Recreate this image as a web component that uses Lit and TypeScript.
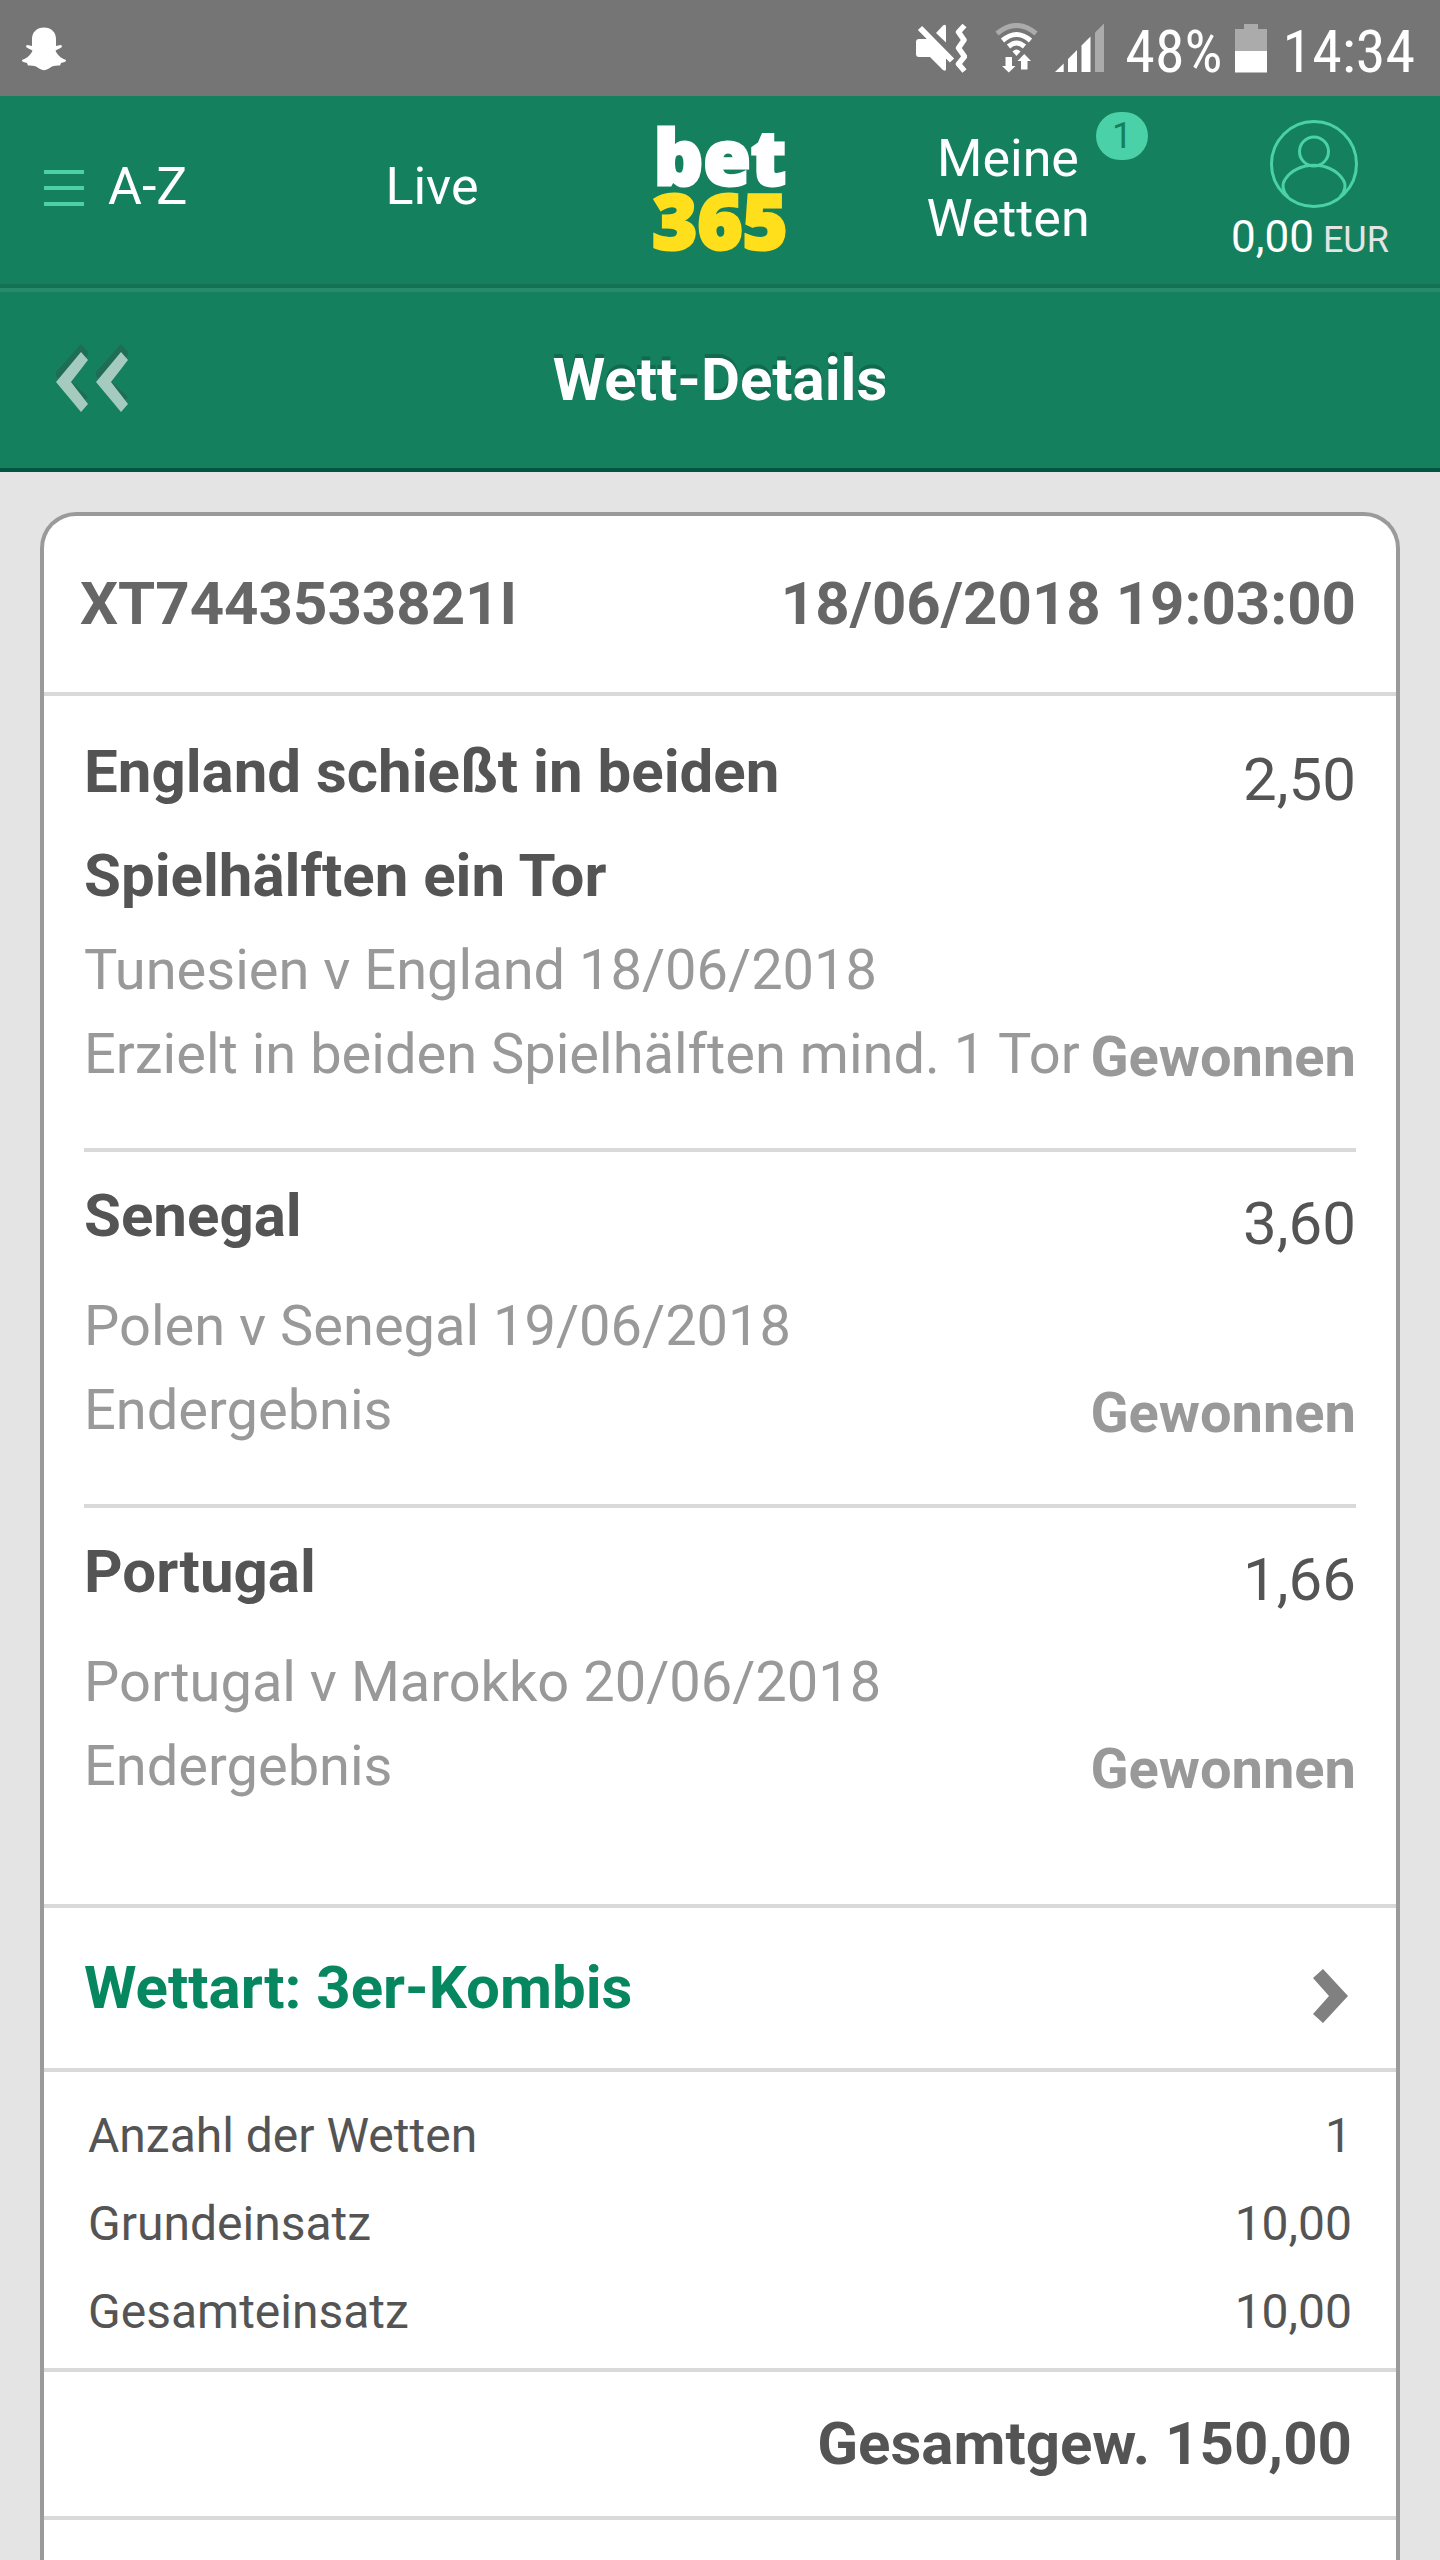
import { LitElement, html, css, svg } from "lit";
import { customElement, property } from "lit/decorators.js";

interface Selection {
  name: string;
  odds: string;
  fixture: string;
  date: string;
  market: string;
  result: string;
}

const selections: Selection[] = [
  {
    name: "England schießt in beiden Spielhälften ein Tor",
    odds: "2,50",
    fixture: "Tunesien v England",
    date: "18/06/2018",
    market: "Erzielt in beiden Spielhälften mind. 1 Tor",
    result: "Gewonnen",
  },
  {
    name: "Senegal",
    odds: "3,60",
    fixture: "Polen v Senegal",
    date: "19/06/2018",
    market: "Endergebnis",
    result: "Gewonnen",
  },
  {
    name: "Portugal",
    odds: "1,66",
    fixture: "Portugal v Marokko",
    date: "20/06/2018",
    market: "Endergebnis",
    result: "Gewonnen",
  },
];

const stakes: [string, string][] = [
  ["Anzahl der Wetten", "1"],
  ["Grundeinsatz", "10,00"],
  ["Gesamteinsatz", "10,00"],
];

const backArrow = (x: number) => svg`
  <path d="M${x + 25} 0 L${x + 32} 8 L${x + 32} 10 L${x + 16} 38 L${x + 32} 53 L${x + 25} 60 L${x} 32 L${x} 28 Z" fill="#1f6d55" />
  <path d="M${x + 25} 8 L${x + 32} 16 L${x + 15} 38 L${x + 32} 60 L${x + 25} 68 L${x} 38 Z" fill="#a5cbbf" />`;

@customElement("phone-status-bar")
export class PhoneStatusBar extends LitElement {
  static styles = css`
    :host {
      display: flex;
      align-items: center;
      justify-content: space-between;
      height: 96px;
      padding: 0 25px 0 20px;
      background: #757575;
      color: #fff;
      font-family: "Roboto Condensed", "Liberation Sans Narrow", Roboto, sans-serif;
      font-size: 60px;
      line-height: 96px;
    }
    svg {
      display: block;
      flex: none;
    }
    .tray {
      display: flex;
      align-items: center;
    }
    .wifi {
      margin-left: 28px;
    }
    .signal {
      margin: 0 20px 0 16px;
    }
    .battery {
      margin: 0 16px 0 12px;
    }
    .text {
      padding-top: 8px;
    }
  `;

  render() {
    return html`
      <svg width="48" height="48" viewBox="20 24 48 48" aria-label="Snapchat" role="img">
        <path
          fill="#fff"
          d="M44 27.5C37 27.5 32 32 32 39V46L27.500 45C26 45 25.500 47 27 47.800L32.500 50.500C31 54.500 28 57.500 22.500 59.800C21.500 60.500 22 61.700 23.500 62L27 63L28 65.500C31 65.800 34 65.300 36.500 66.800C39 68.500 41 70.200 44 70.200C47 70.200 49 68.500 51.500 66.800C54 65.300 57 65.800 60 65.500L61 63L64.500 62C66 61.700 66.500 60.500 65.500 59.800C60 57.500 57 54.500 55.500 50.500L61 47.800C62.500 47 62 45 60.500 45L56 46V39C56 32 51 27.500 44 27.500Z"
        />
      </svg>
      <div class="tray">
        <svg width="52" height="50" viewBox="915 24 52 50" aria-label="Vibration" role="img">
          <path fill="#fff" d="M919 40H931L946 55V70Q946 73 943 71L930 58H919Q916 58 916 55V43Q916 40 919 40Z" />
          <path fill="#fff" d="M936 34L943 26.500Q946 24.500 946 28V43.500Z" />
          <path stroke="#fff" stroke-width="6" d="M920 29L952 61.500" />
          <path
            fill="none"
            stroke="#fff"
            stroke-width="5.500"
            stroke-linejoin="round"
            d="M964.500 26.500L958.500 33L964 41L958.500 49L964.500 57.500L958.500 65L964.500 72"
          />
        </svg>
        <svg class="wifi" width="44" height="50" viewBox="996 24 44 50" aria-label="WLAN" role="img">
          <g fill="none" stroke-width="5">
            <path stroke="#ababab" d="M998 34.500Q1017.500 18.500 1037 34.500" />
            <path stroke="#fff" d="M1003.500 41.500Q1017.500 29.500 1031.500 41.500" />
            <path stroke="#fff" d="M1009.500 47.500Q1017.500 40.500 1025.500 47.500" />
          </g>
          <path fill="#fff" d="M1013.500 52.500Q1017.500 48.500 1021.500 52.500L1017.500 57Z" />
          <path fill="#fff" d="M1006.500 58H1013V67H1016.500L1009.800 73.500L1003 67H1006.500Z" />
          <path fill="#fff" d="M1022 70.500H1028.500V62H1032L1025.300 55L1018.500 62H1022Z" />
        </svg>
        <svg class="signal" width="50" height="50" viewBox="1055 24 50 50" aria-label="Mobilfunk" role="img">
          <path fill="#fff" d="M1055 73L1063.700 64.500V73ZM1068 73V60L1077 51V73ZM1081.500 73V46.500L1090.500 37.500V73Z" />
          <path fill="#ababab" d="M1095 73V33.500L1104 24.500V73Z" />
        </svg>
        <span class="text">48%</span>
        <svg class="battery" width="32" height="50" viewBox="1234 24 32 50" aria-label="Akku" role="img">
          <path fill="#ababab" d="M1243 25H1257V30H1266V52H1234V30H1243Z" />
          <path fill="#fff" d="M1234 52H1266V73.500H1234Z" />
        </svg>
        <span class="text">14:34</span>
      </div>
    `;
  }
}

@customElement("main-navigation")
export class MainNavigation extends LitElement {
  static styles = css`
    :host {
      display: block;
      background: #14805e;
      border-bottom: 4px solid #137253;
    }
    nav {
      display: grid;
      grid-template-columns: repeat(5, 1fr);
      height: 188px;
      font-size: 52px;
      line-height: 60px;
      text-align: center;
    }
    a {
      color: #fff;
      text-decoration: none;
    }
    svg {
      display: block;
      flex: none;
    }
    .menu,
    .live {
      line-height: 182px;
    }
    .menu {
      display: flex;
      align-items: center;
      gap: 24px;
      height: 182px;
      padding-left: 44px;
    }
    .logo {
      padding-top: 28px;
      font-family: "Open Sans", "Noto Sans", sans-serif;
      font-size: 77px;
      font-weight: 800;
      line-height: 64px;
      -webkit-text-stroke: 3px currentColor;
    }
    .logo span {
      display: block;
    }
    .logo .digits {
      color: #ffdf1b;
    }
    .bets {
      position: relative;
      display: flex;
      align-items: center;
      justify-content: center;
      height: 186px;
    }
    .bets .label {
      max-width: 180px;
    }
    .badge {
      position: absolute;
      top: 16px;
      right: 4px;
      width: 52px;
      height: 48px;
      border-radius: 24px;
      background: #4bd1a7;
      color: #14805e;
      font-size: 36px;
      line-height: 48px;
    }
    .account {
      display: flex;
      flex-direction: column;
      align-items: center;
      padding: 24px 0 0 28px;
      font-size: 44px;
      line-height: 58px;
    }
    .currency {
      color: #e4e4e4;
      font-size: 36px;
    }
  `;

  render() {
    return html`
      <nav aria-label="Hauptnavigation">
        <a class="menu" href="#a-z">
          <svg width="40" height="40" viewBox="0 0 40 40" aria-hidden="true">
            <path stroke="#4bd1a7" stroke-width="4" d="M0 5H40M0 21H40M0 37H40" />
          </svg>
          <span>A-Z</span>
        </a>
        <a class="live" href="#live">Live</a>
        <a class="logo" href="#start"><span>bet</span><span class="digits">365</span></a>
        <a class="bets" href="#meine-wetten">
          <span class="label">Meine Wetten</span>
          <span class="badge">1</span>
        </a>
        <a class="account" href="#konto">
          <svg width="96" height="88" viewBox="-4 0 96 88" aria-hidden="true">
            <g fill="none" stroke="#4bd1a7" stroke-width="3">
              <circle cx="48" cy="44" r="42.500" />
              <circle cx="48" cy="31.500" r="14.500" />
              <path d="M22 77C16 71 16 64 19 59.500C31 40.500 65 40.500 77 59.500C80 64 80 71 74 77" />
            </g>
          </svg>
          <span>0,00<span class="currency"> EUR</span></span>
        </a>
      </nav>
    `;
  }
}

@customElement("title-bar")
export class TitleBar extends LitElement {
  @property() heading = "";

  static styles = css`
    :host {
      display: grid;
      grid-template-columns: 1fr auto 1fr;
      align-items: center;
      border-top: 4px solid #278a6a;
      border-bottom: 4px solid #005640;
      background: #14805e;
      color: #fff;
    }
    h1 {
      margin: 0;
      font-size: 60px;
      font-weight: 700;
      line-height: 176px;
      text-shadow: 0 -4px 0 #116a4e;
    }
    button {
      justify-self: start;
      margin-left: 56px;
      padding: 0;
      border: 0;
      background: none;
    }
    svg {
      display: block;
    }
  `;

  render() {
    return html`
      <button type="button" aria-label="Zurück">
        <svg width="72" height="72" viewBox="0 0 72 72" aria-hidden="true">${backArrow(0)}${backArrow(40)}</svg>
      </button>
      <h1>${this.heading}</h1>
    `;
  }
}

@customElement("bet-slip")
export class BetSlip extends LitElement {
  static styles = css`
    :host {
      display: block;
      box-sizing: border-box;
      border: 4px solid #9a9a9a;
      border-bottom: 0;
      border-radius: 36px 36px 0 0;
      background: #fff;
      color: #545454;
      font-size: 60px;
    }
    header {
      display: flex;
      justify-content: space-between;
      padding: 0 40px 0 36px;
      border-bottom: 4px solid #d9d9d9;
      color: #666;
      font-weight: 700;
      line-height: 176px;
    }
    ul {
      margin: 0;
      padding: 12px 40px 44px;
      border-bottom: 4px solid #d9d9d9;
      list-style: none;
    }
    .selection {
      display: flex;
      padding: 12px 0 52px;
    }
    .selection + .selection {
      border-top: 4px solid #d9d9d9;
    }
    .bet {
      flex: 1;
      min-width: 0;
    }
    h2,
    p {
      margin: 0;
    }
    h2 {
      min-height: 120px;
      font-size: 60px;
      font-weight: 700;
      line-height: 104px;
    }
    p {
      color: #999;
      font-size: 56px;
      line-height: 84px;
    }
    .outcome {
      display: flex;
      flex-direction: column;
      justify-content: space-between;
      text-align: right;
    }
    .odds {
      line-height: 120px;
    }
    .result {
      color: #999;
      font-size: 56px;
      font-weight: 700;
      line-height: 78px;
    }
    .type {
      display: flex;
      align-items: center;
      justify-content: space-between;
      width: 100%;
      padding: 0 48px 0 40px;
      border: 0;
      border-bottom: 4px solid #d9d9d9;
      background: none;
      color: #06875f;
      font: inherit;
      font-weight: 700;
      line-height: 160px;
      text-align: left;
    }
    .type svg {
      display: block;
      padding-top: 16px;
    }
    .stakes {
      padding: 20px 44px 12px;
      border-bottom: 4px solid #d9d9d9;
    }
    table {
      width: 100%;
      border-collapse: collapse;
      font-size: 48px;
      line-height: 88px;
    }
    th,
    td {
      padding: 0;
      font-weight: 400;
      text-align: left;
    }
    td {
      text-align: right;
    }
    .total {
      padding-right: 44px;
      border-bottom: 4px solid #d9d9d9;
      font-weight: 700;
      line-height: 144px;
      text-align: right;
    }
  `;

  render() {
    return html`
      <header><span>XT7443533821I</span><time>18/06/2018 19:03:00</time></header>
      <ul>
        ${selections.map(
          (s) => html`
            <li class="selection">
              <div class="bet">
                <h2>${s.name}</h2>
                <p>${s.fixture} <time>${s.date}</time></p>
                <p>${s.market}</p>
              </div>
              <div class="outcome">
                <span class="odds">${s.odds}</span>
                <span class="result">${s.result}</span>
              </div>
            </li>
          `,
        )}
      </ul>
      <button class="type" type="button">
        <span>Wettart: 3er-Kombis</span>
        <svg width="36" height="56" viewBox="0 0 36 56" aria-hidden="true">
          <path fill="#808080" d="M1 10L11 1L36 28L11 55L1 46L17 28Z" />
        </svg>
      </button>
      <div class="stakes">
        <table>
          <tbody>
            ${stakes.map(([label, value]) => html`<tr><th scope="row">${label}</th><td>${value}</td></tr>`)}
          </tbody>
        </table>
      </div>
      <div class="total">Gesamtgew. 150,00</div>
    `;
  }
}

@customElement("app-root")
export class AppRoot extends LitElement {
  static styles = css`
    :host {
      display: flex;
      flex-direction: column;
      min-height: 100vh;
      background: #e4e4e4;
      font-family: Roboto, sans-serif;
    }
    main {
      display: flex;
      flex: 1;
      padding: 40px 40px 0;
    }
    bet-slip {
      flex: 1;
      min-width: 0;
    }
  `;

  render() {
    return html`
      <phone-status-bar></phone-status-bar>
      <main-navigation></main-navigation>
      <title-bar heading="Wett-Details"></title-bar>
      <main><bet-slip></bet-slip></main>
    `;
  }
}
